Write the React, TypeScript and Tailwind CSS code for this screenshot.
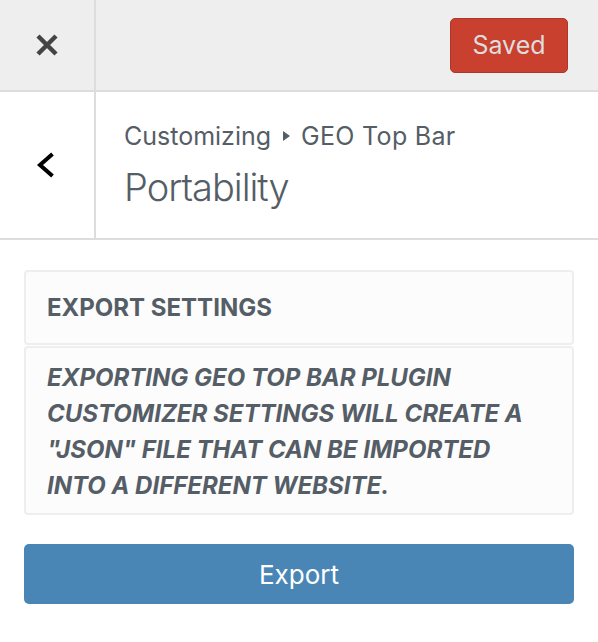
export default function App() {
  return (
    <div className="w-[598px] h-[642px] bg-white font-['Inter',sans-serif] text-[#555d66]">
      {/* top bar */}
      <div className="flex h-[92px] bg-[#eeeeee] border-b-2 border-[#dddddd]">
        <div className="flex w-[96px] items-center justify-center border-r-2 border-[#dddddd]">
          <svg width="24" height="24" viewBox="0 0 24 24">
            <path d="M3 3 L21 21 M21 3 L3 21" stroke="#444" strokeWidth="4.5" strokeLinecap="butt" />
          </svg>
        </div>
        <div className="flex flex-1 items-start justify-end pr-[30px] pt-[18px]">
          <button className="h-[55px] w-[118px] rounded-[5px] border border-[#b0362a] bg-[#c9402f] text-[25px] text-[#dddddd]">
            Saved
          </button>
        </div>
      </div>
      {/* section header */}
      <div className="flex h-[148px] border-b-2 border-[#dddddd]">
        <div className="flex w-[96px] items-center justify-center border-r-2 border-[#dddddd]">
          <svg width="20" height="26" viewBox="0 0 20 26" className="mr-[2px]">
            <path d="M16.5 2 L4 13 L16.5 24" fill="none" stroke="#000" strokeWidth="4" />
          </svg>
        </div>
        <div className="flex flex-col pl-[28px] pt-[28px]">
          <div className="flex items-center text-[25px] leading-[32px]">
            Customizing
            <svg width="7" height="10" viewBox="0 0 7 10" className="ml-[12px] mr-[11px]">
              <path d="M0 0 L7 5 L0 10 Z" fill="#555d66" />
            </svg>
            <span className="tracking-[0.3px]">GEO Top Bar</span>
          </div>
          <div className="mt-[13px] text-[38px] font-light leading-[44px] tracking-[-1px]">Portability</div>
        </div>
      </div>
      {/* content */}
      <div className="px-[24px] pt-[30px]">
        <div className="rounded-[4px] border-2 border-[#eeeeee] bg-[#fcfcfc] px-[21px] pt-[21px] pb-[21px] text-[24px] font-bold leading-[29px]">
          EXPORT SETTINGS
        </div>
        <div className="mt-[1px] rounded-[4px] border-2 border-[#eeeeee] bg-[#fcfcfc] px-[21px] pt-[12px] pb-[9px] text-[24px] font-bold italic uppercase leading-[36px]">
          Exporting GEO Top Bar plugin customizer settings will create a "JSON" file that can be imported into a different website.
        </div>
        <button className="mt-[29px] h-[60px] w-full rounded-[5px] bg-[#4a86b5] text-[26px] text-white">
          Export
        </button>
      </div>
    </div>
  )
}
